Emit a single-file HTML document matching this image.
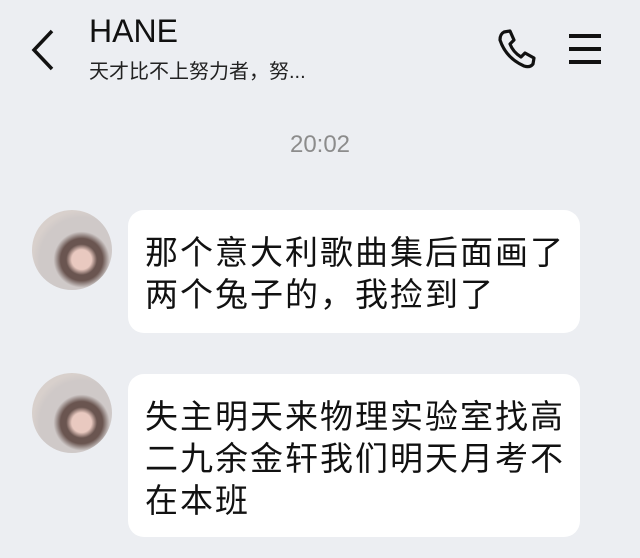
<!DOCTYPE html>
<html><head><meta charset="utf-8"><style>
*{margin:0;padding:0;box-sizing:border-box}
body{width:640px;height:558px;background:#eceef2;position:relative;overflow:hidden;font-family:"Liberation Sans","Noto Sans CJK SC",sans-serif;color:#111}
.abs{position:absolute}
.title{left:89px;top:12px;font-size:32px;line-height:38px;color:#111}
.sub{left:89px;top:59px;font-size:20px;line-height:26px;color:#222}
.time{left:0;width:640px;top:131px;text-align:center;font-size:24px;color:#8c8c8c}
.av{left:32px;width:80px;height:80px;border-radius:50%;overflow:hidden;background:radial-gradient(ellipse at 62% 62%,#e9c9c0 0 14%,#6a5550 22% 30%,#cfc9c8 40% 60%,#d8d0cc 70% 100%)}
.bub{left:128px;width:452px;background:#fff;border-radius:16px;padding:22px 10px 0 17px;font-size:33px;line-height:42px;letter-spacing:2px;color:#111}
</style></head><body>
<svg class="abs" style="left:28px;top:28px" width="30" height="44" viewBox="0 0 30 44"><path d="M24 3 L6 22 L24 41" fill="none" stroke="#111" stroke-width="3.5"/></svg>
<div class="abs title">HANE</div>
<div class="abs sub">天才比不上努力者，努...</div>
<svg class="abs" style="left:496px;top:28px" width="44" height="42" viewBox="0 0 44 42"><path d="M8 4 L14 3 L18 12 L14 16 Q17 24 25 29 L29 25 L38 30 L37 36 Q34 40 28 38 Q10 30 4 12 Q4 6 8 4 Z" fill="none" stroke="#111" stroke-width="3.2" stroke-linejoin="round"/></svg>
<div class="abs" style="left:569px;top:34px;width:32px;height:3.5px;background:#111"></div>
<div class="abs" style="left:569px;top:47px;width:32px;height:3.5px;background:#111"></div>
<div class="abs" style="left:569px;top:60px;width:32px;height:3.5px;background:#111"></div>
<div class="abs time">20:02</div>
<div class="abs av" style="top:210px"></div>
<div class="abs bub" style="top:210px;height:123px">那个意大利歌曲集后面画了<br>两个兔子的，我捡到了</div>
<div class="abs av" style="top:373px"></div>
<div class="abs bub" style="top:374px;height:163px">失主明天来物理实验室找高<br>二九余金轩我们明天月考不<br>在本班</div>
</body></html>
